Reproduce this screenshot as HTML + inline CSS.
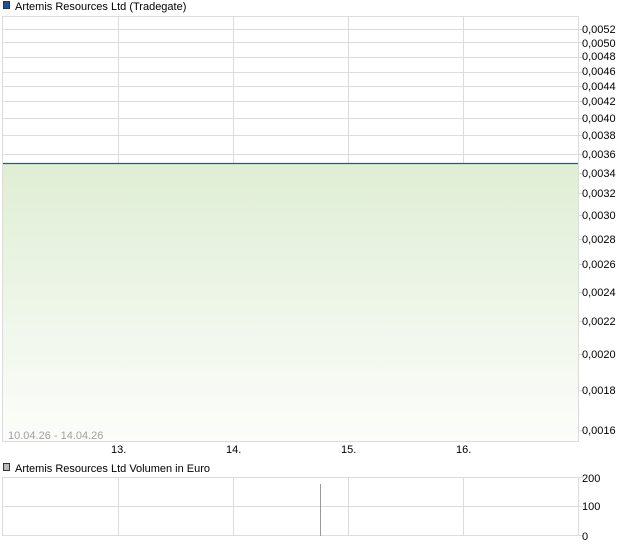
<!DOCTYPE html>
<html><head><meta charset="utf-8"><style>
html,body{margin:0;padding:0;background:#fff;width:620px;height:546px;overflow:hidden}
svg{display:block;font-family:"Liberation Sans",Arial,sans-serif;font-size:11px}
</style></head><body>
<svg width="620" height="546" viewBox="0 0 620 546">
<defs><linearGradient id="g" x1="0" y1="0" x2="0" y2="1"><stop offset="0" stop-color="#dfeed4"/><stop offset="1" stop-color="#fcfdfb"/></linearGradient></defs>
<rect x="3.5" y="1.5" width="6" height="7" fill="#1c4fa8" stroke="#333" stroke-width="1"/>
<text x="15" y="10" fill="#000">Artemis Resources Ltd (Tradegate)</text>
<g stroke="#dcdcdc" stroke-width="1" fill="none">
<rect x="2.5" y="16.5" width="576" height="425"/>
<path d="M118.5 16V441M233.5 16V441M348.5 16V441M463.5 16V441"/>
<path d="M2 29.5H583M2 42.5H583M2 57.5H583M2 72.5H583M2 86.5H583M2 101.5H583M2 118.5H583M2 135.5H583M2 154.5H583"/>
<path d="M578 173.5H583M578 193.5H583M578 215.5H583M578 239.5H583M578 264.5H583M578 292.5H583M578 321.5H583M578 354.5H583M578 390.5H583M578 430.5H583"/>
</g>
<rect x="3" y="163" width="575" height="278" fill="url(#g)"/>
<path d="M3 163.5H578" stroke="#34586a" stroke-width="1.2"/>
<g fill="#000">
<text x="582" y="33">0,0052</text><text x="582" y="47">0,0050</text><text x="582" y="60">0,0048</text><text x="582" y="75">0,0046</text><text x="582" y="90">0,0044</text><text x="582" y="105">0,0042</text><text x="582" y="122">0,0040</text><text x="582" y="139">0,0038</text><text x="582" y="158">0,0036</text><text x="582" y="177">0,0034</text><text x="582" y="197">0,0032</text><text x="582" y="219">0,0030</text><text x="582" y="243">0,0028</text><text x="582" y="268">0,0026</text><text x="582" y="296">0,0024</text><text x="582" y="325">0,0022</text><text x="582" y="358">0,0020</text><text x="582" y="394">0,0018</text><text x="582" y="434">0,0016</text>
<text x="111" y="453">13.</text><text x="226" y="453">14.</text><text x="341" y="453">15.</text><text x="456" y="453">16.</text>
</g>
<text x="8" y="439" fill="#a0a0a0">10.04.26 - 14.04.26</text>
<rect x="3.5" y="463.5" width="6" height="7" fill="#bbb" stroke="#333" stroke-width="1"/>
<text x="15" y="472" fill="#000">Artemis Resources Ltd Volumen in Euro</text>
<g stroke="#dcdcdc" stroke-width="1" fill="none">
<rect x="2.5" y="477.5" width="576" height="58"/>
<path d="M118.5 477V536M233.5 477V536M348.5 477V536M463.5 477V536M2 506.5H583M578 477.5H583M578 535.5H583"/>
</g>
<path d="M320.5 484V536" stroke="#999" stroke-width="1"/>
<g fill="#000"><text x="582" y="482">200</text><text x="582" y="510">100</text><text x="582" y="540">0</text></g>
</svg>
</body></html>
